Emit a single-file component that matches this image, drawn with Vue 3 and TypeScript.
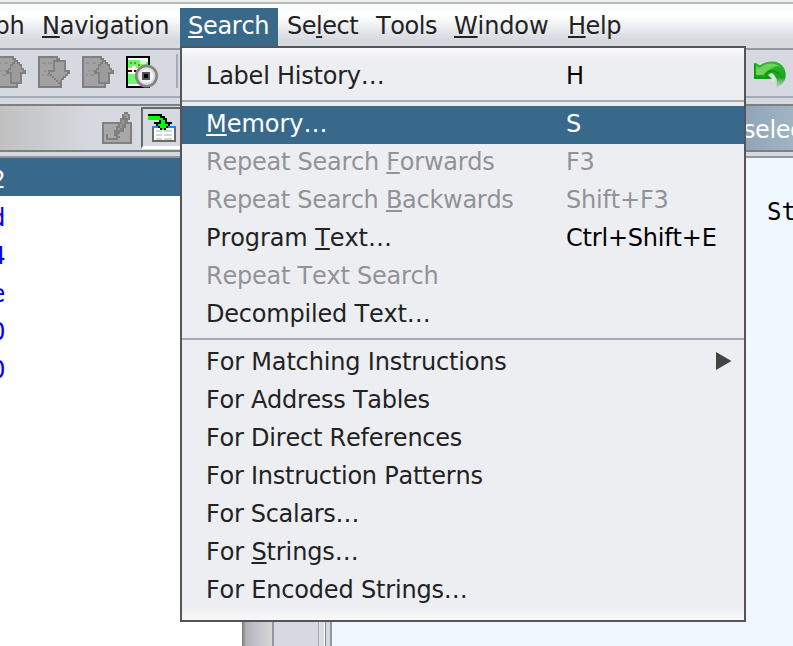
<script setup lang="ts">
interface Part { text: string; key?: boolean }
interface Row { label: string; at?: number; shortcut?: string; state?: 'active' | 'disabled'; sub?: boolean; track: number }

const bar = [
  { label: 'Graph', at: -1, cls: 'graph', track: -0.2 },
  { label: 'Navigation', at: 0, cls: 'navigation', track: -0.23 },
  { label: 'Search', at: 0, cls: 'search', track: -0.3 },
  { label: 'Select', at: 2, cls: 'select', track: -0.5 },
  { label: 'Tools', at: -1, cls: 'tools', track: -0.4 },
  { label: 'Window', at: 0, cls: 'window', track: -0.13 },
  { label: 'Help', at: 0, cls: 'help', track: -0.45 },
]

const groups: Row[][] = [
  [{ label: 'Label History…', shortcut: 'H', track: -0.23 }],
  [
    { label: 'Memory…', at: 0, shortcut: 'S', state: 'active', track: -0.03 },
    { label: 'Repeat Search Forwards', at: 14, shortcut: 'F3', state: 'disabled', track: -0.25 },
    { label: 'Repeat Search Backwards', at: 14, shortcut: 'Shift+F3', state: 'disabled', track: -0.28 },
    { label: 'Program Text…', at: 8, shortcut: 'Ctrl+Shift+E', track: -0.08 },
    { label: 'Repeat Text Search', state: 'disabled', track: -0.24 },
    { label: 'Decompiled Text…', track: -0.2 },
  ],
  [
    { label: 'For Matching Instructions', sub: true, track: -0.17 },
    { label: 'For Address Tables', track: -0.27 },
    { label: 'For Direct References', track: -0.23 },
    { label: 'For Instruction Patterns', track: -0.24 },
    { label: 'For Scalars…', track: -0.3 },
    { label: 'For Strings…', at: 4, track: -0.13 },
    { label: 'For Encoded Strings…', track: -0.18 },
  ],
]

const listing = ['2', 'd', '4', 'e', '0', '0']

function parts(label: string, at = -1): Part[] {
  if (at < 0) return [{ text: label }]
  return [{ text: label.slice(0, at) }, { text: label[at], key: true }, { text: label.slice(at + 1) }].filter(p => p.text)
}
</script>

<template>
  <div class="app">
    <nav class="menubar">
      <div v-for="b in bar" :key="b.label" class="baritem" :class="b.cls" :style="{ letterSpacing: b.track + 'px' }"><span v-for="(p, i) in parts(b.label, b.at)" :key="i" :class="{ key: p.key }">{{ p.text }}</span></div>
    </nav>

    <div class="toolbar">
      <svg v-for="(dir, i) in ['up', 'down', 'up']" :key="i" class="icon" width="32" height="32" viewBox="0 0 32 32" shape-rendering="crispEdges">
        <path d="M1 1H19V3H21V5H23V31H1Z" fill="#a2a2a2" stroke="#808080" stroke-width="2" />
        <path d="M4 7h4M10 7h4M6 15h2M10 15h4M4 19h2M8 19h4" stroke="#949494" stroke-width="2" />
        <g v-if="dir === 'up'">
          <path d="M20 4H24V6H26V8H28V12H30V14H32V18H28V28H16V18H12V14H14V12H16V8H18V6H20Z" fill="#808080" />
          <path d="M21 6H23V8H25V10H27V14H29V16H26V26H18V16H15V14H17V10H19V8H21Z" fill="#9c9c9c" />
        </g>
        <g v-else>
          <path d="M15 4H28V14H32V18H30V20H28V22H26V24H24V26H22V28H20V26H18V24H16V22H14V20H12V18H10V14H15Z" fill="#808080" />
          <path d="M17 6H26V16H29V18H27V20H25V22H23V24H22V26H20V24H18V22H16V20H14V18H12V16H17Z" fill="#a0a0a0" />
        </g>
      </svg>
      <svg class="icon" width="34" height="32" viewBox="0 0 34 32">
        <g shape-rendering="crispEdges">
          <path d="M0 0H24V32H0Z" fill="#000" />
          <path d="M2 2H22V30H2Z" fill="#fff" />
          <path d="M2 4H14V12H10V10H6V12H2ZM14 6H22V18H14ZM2 18H12V28H2Z" fill="#66ff66" />
          <path d="M14 6h6v2h-6z" fill="#ccffcc" />
          <path d="M4 6h2v2h-2zM8 8h2v-2h-2zM12 8h2v2h-2z" fill="#b07030" />
          <path d="M2 14h4v2h-4zM8 14h2v2h-2z" fill="#400000" />
        </g>
        <circle cx="20.5" cy="20" r="10.2" fill="#f3f3f3" stroke="#858585" stroke-width="2.8" />
        <circle cx="20.5" cy="20" r="7.8" fill="none" stroke="#d8d8d8" stroke-width="1.5" />
        <rect x="16" y="16" width="8" height="8" fill="#555" />
        <rect x="18" y="18" width="4" height="4" fill="#000" />
      </svg>
      <span class="divider"></span>
      <svg class="undo" width="34" height="28" viewBox="0 0 34 28">
        <defs>
          <linearGradient id="leaf" x1="0" y1="0" x2="0" y2="1">
            <stop offset="0" stop-color="#38b838" /><stop offset=".6" stop-color="#16a51a" /><stop offset="1" stop-color="#3fbc40" stop-opacity=".05" />
          </linearGradient>
        </defs>
        <path d="M0 2H2L6 4.500C12-.5 25-2 30 7C34 15 31 23 22 27C23 22 24 18 20 14L17 12L14 14L18 18H0Z" fill="url(#leaf)" />
        <path d="M2 5L6 7C12 1.500 20 1.500 25 5C21 5 17 7 13 10L10 14H2Z" fill="#6dd45a" />
        <path d="M1 3V17H15L11 13C16 9 21 9 25 13" fill="none" stroke="#0c980c" stroke-width="1.600" />
        <path d="M17 13C20 14 21 18 18 20" fill="none" stroke="#d8eed8" stroke-width="2" />
      </svg>
    </div>

    <main class="work">
      <section class="left">
        <header class="lefthead">
          <svg class="pen" width="30" height="32" viewBox="0 0 30 32" shape-rendering="crispEdges">
            <path d="M1 11H29V31H1Z" fill="#a8a8a8" stroke="#808080" stroke-width="2" />
            <path d="M4 22h2v4h8v-2h4v2h-2v2H4z" fill="#808080" />
            <path d="M22 0H26V2H28V8H26V12H24V16H22V20H18V22H16V24H12V18H14V14H16V10H18V6H20V2H22Z" fill="#808080" />
            <path d="M22 2h4v4h-2v-2h-2zM20 8h2v4h-2zM18 12h2v4h-2zM16 16h2v2h-2z" fill="#989898" />
          </svg>
          <div class="toggle">
            <svg width="28" height="30" viewBox="0 0 28 30" shape-rendering="crispEdges">
              <path d="M4 12H28V28H4Z" fill="#666b66" />
              <path d="M6 14H26V26H6Z" fill="#fff" />
              <path d="M4 12H28V14H4Z" fill="#1c86ff" />
              <path d="M8 17h6M16 17h8M8 21h6M16 21h8M8 25h6M16 25h8" stroke="#d4d4d4" stroke-width="2" />
              <path d="M0 0H14V2H17V4H19V8H24V10H22V12H20V14H18V16H12V14H10V12H8V10H6V8H11V6H0Z" fill="#000" />
              <path d="M0 2H12V4H15V6H17V10H20V12H18V14H16V16H14V14H12V12H10V10H13V6H0Z" fill="#0f0" />
            </svg>
          </div>
        </header>
        <ul class="listing">
          <li v-for="(ch, i) in listing" :key="i" :class="{ current: i === 0 }">{{ ch }}</li>
        </ul>
      </section>
      <div class="gutter"></div>
      <div class="splitter"></div>
      <section class="right">
        <header class="righthead">selected</header>
        <div class="code">St</div>
      </section>
    </main>

    <div class="menu">
      <template v-for="(g, gi) in groups" :key="gi">
        <div v-if="gi" class="sep"></div>
        <div v-for="r in g" :key="r.label" class="row" :class="r.state">
          <span class="label" :style="{ letterSpacing: r.track + 'px' }"><span v-for="(p, i) in parts(r.label, r.at)" :key="i" :class="{ key: p.key }">{{ p.text }}</span></span>
          <span v-if="r.shortcut" class="shortcut">{{ r.shortcut }}</span>
          <svg v-if="r.sub" class="arrow" width="16" height="18" viewBox="0 0 16 18"><path d="M0 0L15.5 9L0 18Z" fill="#444" /></svg>
        </div>
      </template>
    </div>
  </div>
</template>

<style>
body { margin: 0; overflow: hidden; }
</style>
<style scoped>
* { box-sizing: border-box; }
.app { width: 793px; height: 646px; position: relative; display: flex; flex-direction: column; font: 24px/36px "DejaVu Sans", sans-serif; font-kerning: none; letter-spacing: -0.13px; color: #222; background: #d6d9df; overflow: hidden; }
.menubar { display: flex; flex: none; height: 50px; padding-top: 6px; border-top: 2px solid #eee; border-bottom: 2px solid #9297a1; background: linear-gradient(#bbb 2px, #f8faf9 2px, #fff 14px, #d6d9df 38px); }
.baritem { flex: none; height: 38px; padding-left: 8px; white-space: pre; }
.graph { width: 90px; margin-left: -56px; }
.navigation { width: 146px; }
.search { width: 98px; background: #39698a; color: #fff; }
.select { width: 90px; padding-left: 9px; }
.tools { width: 78px; }
.window { width: 114px; }
.key { text-decoration: underline 2px; text-underline-offset: 2px; text-decoration-skip-ink: none; }
.toolbar { display: flex; flex: none; height: 48px; padding-top: 6px; border-bottom: 2px solid #a4abb5; }
.icon { flex: none; margin-right: 12px; }
.icon:first-child { margin-left: -6px; }
.divider { flex: none; width: 2px; height: 34px; margin: -2px 0 0 4px; background: #a4abb5; }
.undo { margin: 5px 0 0 576px; flex: none; }
.work { display: flex; flex: 1; margin-top: 6px; }
.left { flex: none; width: 242px; display: flex; flex-direction: column; background: #fff; }
.lefthead { display: flex; height: 48px; padding: 6px 0 0 102px; border: solid #808080; border-width: 2px 0; background: linear-gradient(90deg, #c0c0c0, #d6d9df 92px); }
.toggle { height: 42px; width: 60px; margin: -5px 0 0 9px; padding: 5px 0 0 5px; border: 2px solid #666970; border-bottom: 3px solid #fff; background: #d6d9df; }
.listing { list-style: none; margin: 4px 0 0; padding: 0; border-top: 2px solid #9097a3; box-shadow: 0 -4px #d6d9df; font-family: "DejaVu Sans Mono", monospace; color: #00f; line-height: 44px; }
.listing li { height: 38px; text-indent: -9px; }
.current { background: #39698a; color: #fff; }
.gutter { flex: none; width: 32px; border-right: 2px solid #9097a8; background: linear-gradient(90deg, #777, #b2b2b5 4px, #bfc0c3 12px, #d6d6d6); }
.splitter { flex: none; width: 58px; border-right: 2px solid #9097a8; background: linear-gradient(90deg, #d6d9df 44px, #a9adb8 44px, #a9adb8 45px, #dcdee2 45px, #dcdee2 50px, #fff 50px, #fff 51px, #888 51px, #888 52px, #d6d9df 52px); }
.right { flex: 1; min-width: 0; background: #eff7ff; }
.righthead { height: 48px; padding-left: 411px; border: solid #808080; border-width: 2px 0; color: #fff; line-height: 48px; letter-spacing: -0.4px; overflow: hidden; background: linear-gradient(90deg, #4a7594, #8fa6b9 412px, #a0b4c3); }
.code { margin-top: 4px; border-top: 2px solid #9097a3; box-shadow: 0 -4px #d6d9df; padding: 36px 0 0 435px; font-family: "DejaVu Sans Mono", monospace; color: #000; letter-spacing: 0; line-height: 36px; }
.menu { position: absolute; left: 180px; top: 46px; width: 566px; border: 2px solid #555559; padding: 10px 0; background: linear-gradient(#fafafc, #edeef2 12px, #edeef2 560px, #f9f9f8); }
.row { display: flex; height: 38px; padding-left: 24px; white-space: pre; }
.label { width: 360px; }
.shortcut { color: #000; letter-spacing: -0.2px; }
.active, .active .shortcut { background: #39698a; color: #fff; }
.disabled, .disabled .shortcut { color: #929395; }
.arrow { margin: 8px 0 0 150px; }
.sep { height: 10px; background: linear-gradient(transparent 4px, #a4abb5 4px, #a4abb5 6px, transparent 6px); }
</style>
